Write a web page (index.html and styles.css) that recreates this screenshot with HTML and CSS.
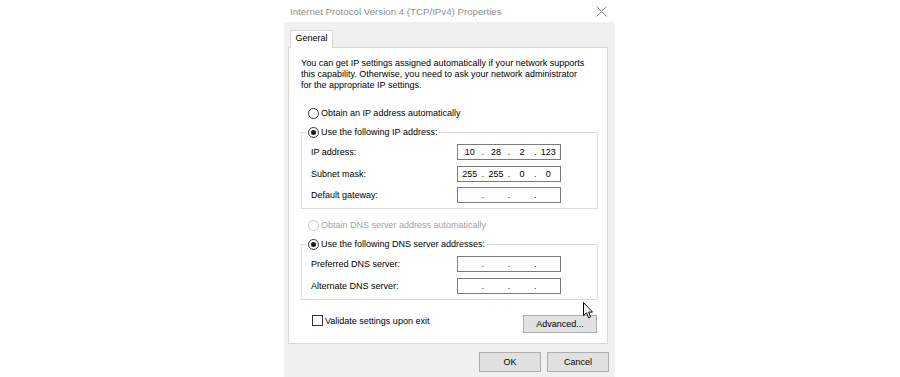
FILE: index.html
```html
<!DOCTYPE html>
<html lang="en">
<head>
    <meta charset="UTF-8">
    <title>Internet Protocol Version 4 (TCP/IPv4) Properties</title>
    <link rel="stylesheet" href="styles.css">
</head>
<body>
    <div class="window">
        <div class="titlebar">
            <span class="title">Internet Protocol Version 4 (TCP/IPv4) Properties</span>
            <svg class="close" width="11" height="11" viewBox="0 0 11 11">
                <path d="M0.5 0.5 L10.5 10.5 M10.5 0.5 L0.5 10.5" stroke="#8c8c8c" stroke-width="1" fill="none"/>
            </svg>
        </div>

        <div class="client">
            <div class="tabs">
                <div class="tab">General</div>
            </div>

            <div class="page">
                <p class="intro">You can get IP settings assigned automatically if your network supports<br>this capability. Otherwise, you need to ask your network administrator<br>for the appropriate IP settings.</p>

                <label class="option first"><span class="radio"></span>Obtain an IP address automatically</label>

                <fieldset class="group">
                    <legend><label class="option"><span class="radio checked"></span>Use the following IP address:</label></legend>
                    <div class="fields">
                        <span>IP address:</span>
                        <div class="ip"><span>10</span><i>.</i><span>28</span><i>.</i><span>2</span><i>.</i><span>123</span></div>
                        <span>Subnet mask:</span>
                        <div class="ip"><span>255</span><i>.</i><span>255</span><i>.</i><span>0</span><i>.</i><span>0</span></div>
                        <span>Default gateway:</span>
                        <div class="ip"><span></span><i>.</i><span></span><i>.</i><span></span><i>.</i><span></span></div>
                    </div>
                </fieldset>

                <label class="option disabled"><span class="radio"></span>Obtain DNS server address automatically</label>

                <fieldset class="group dns">
                    <legend><label class="option"><span class="radio checked"></span>Use the following DNS server addresses:</label></legend>
                    <div class="fields">
                        <span>Preferred DNS server:</span>
                        <div class="ip"><span></span><i>.</i><span></span><i>.</i><span></span><i>.</i><span></span></div>
                        <span>Alternate DNS server:</span>
                        <div class="ip"><span></span><i>.</i><span></span><i>.</i><span></span><i>.</i><span></span></div>
                    </div>
                </fieldset>

                <div class="page-footer">
                    <label class="check"><span class="box"></span>Validate settings upon exit</label>
                    <button class="btn advanced">Advanced...</button>
                </div>
            </div>

            <div class="actions">
                <button class="btn">OK</button>
                <button class="btn">Cancel</button>
            </div>
        </div>
    </div>

    <!-- mouse pointer -->
    <svg class="cursor" width="12" height="18" viewBox="0 0 12 18">
        <path d="M0.5 0.5 L0.5 13.5 L3.5 10.8 L5.6 15.8 L7.6 14.9 L5.6 10.1 L9.5 10.1 Z" fill="#fff" stroke="#000" stroke-width="1" stroke-linejoin="round"/>
    </svg>
</body>
</html>
```

FILE: styles.css
```css
body {
    margin: 0;
    background-color: #fff;
    font-family: "Liberation Sans", Arial, sans-serif;
    font-size: 9px;
    color: #000;
}
.window {
    width: 331px;
    margin-left: 284px;
}
.titlebar {
    height: 22px;
    display: flex;
    align-items: center;
    justify-content: space-between;
    padding: 0 8px 0 6px;
    background-color: #fff;
}
.title {
    font-size: 9.7px;
    color: #8f8f8f;
}
.close {
    display: block;
}
.client {
    height: 355px;
    box-sizing: border-box;
    background-color: #f0f0f0;
    padding: 8px 7px 0 4px;
}
.tabs {
    display: flex;
    padding-left: 2px;
}
.tab {
    position: relative;
    z-index: 1;
    width: 43px;
    height: 18px;
    box-sizing: border-box;
    margin-bottom: -1px;
    border: 1px solid #d9d9d9;
    border-bottom: none;
    background-color: #fff;
    text-align: center;
    line-height: 15px;
}
.page {
    height: 297px;
    box-sizing: border-box;
    border: 1px solid #d9d9d9;
    background-color: #fff;
    padding: 10px 9px 0 12px;
}
.intro {
    margin: 0;
    line-height: 11px;
}
.option {
    display: flex;
    align-items: center;
    height: 14px;
    white-space: nowrap;
}
.option.first {
    margin-top: 15px;
    padding-left: 7px;
}
.option.disabled {
    margin-top: 9px;
    padding-left: 7px;
    color: #a3a3a3;
}
.radio {
    width: 11px;
    height: 11px;
    box-sizing: border-box;
    border: 1px solid #333;
    border-radius: 50%;
    margin-right: 2px;
    display: flex;
    align-items: center;
    justify-content: center;
}
.radio.checked::after {
    content: "";
    width: 5px;
    height: 5px;
    border-radius: 50%;
    background-color: #1a1a1a;
}
.disabled .radio {
    border-color: #c6c6c6;
}
.group {
    margin: 5px 0 0 0;
    border: 1px solid #dcdcdc;
    padding: 5px 0 5px 9px;
}
.group.dns {
    padding-bottom: 5.5px;
}
.group legend {
    padding: 0 2px;
    margin-left: -5px;
}
.fields {
    display: grid;
    grid-template-columns: 146px 104px;
    row-gap: 5.5px;
    align-items: center;
}
.ip {
    height: 16px;
    box-sizing: border-box;
    border: 1px solid #7a7a7a;
    background-color: #fff;
    display: flex;
    align-items: center;
    padding: 0 1px;
}
.ip span {
    width: 22px;
    text-align: center;
}
.ip i {
    width: 5px;
    font-style: normal;
    text-align: center;
}
.page-footer {
    display: flex;
    justify-content: space-between;
    align-items: flex-start;
    margin-top: 15px;
}
.check {
    display: flex;
    align-items: center;
    height: 13px;
    padding-left: 11px;
    margin-top: -1px;
}
.box {
    width: 11px;
    height: 11px;
    box-sizing: border-box;
    border: 1px solid #333;
    margin-right: 2px;
}
.btn {
    width: 62px;
    height: 20px;
    padding: 0;
    border: 1px solid #adadad;
    background-color: #e1e1e1;
    font-family: "Liberation Sans", Arial, sans-serif;
    font-size: 9px;
    color: #000;
}
.btn.advanced {
    width: 74px;
    height: 18px;
    margin-right: 1px;
}
.actions {
    display: flex;
    justify-content: flex-end;
    gap: 6px;
    margin-top: 8px;
    margin-right: -1px;
}
.cursor {
    position: absolute;
    left: 583px;
    top: 302px;
}
```
